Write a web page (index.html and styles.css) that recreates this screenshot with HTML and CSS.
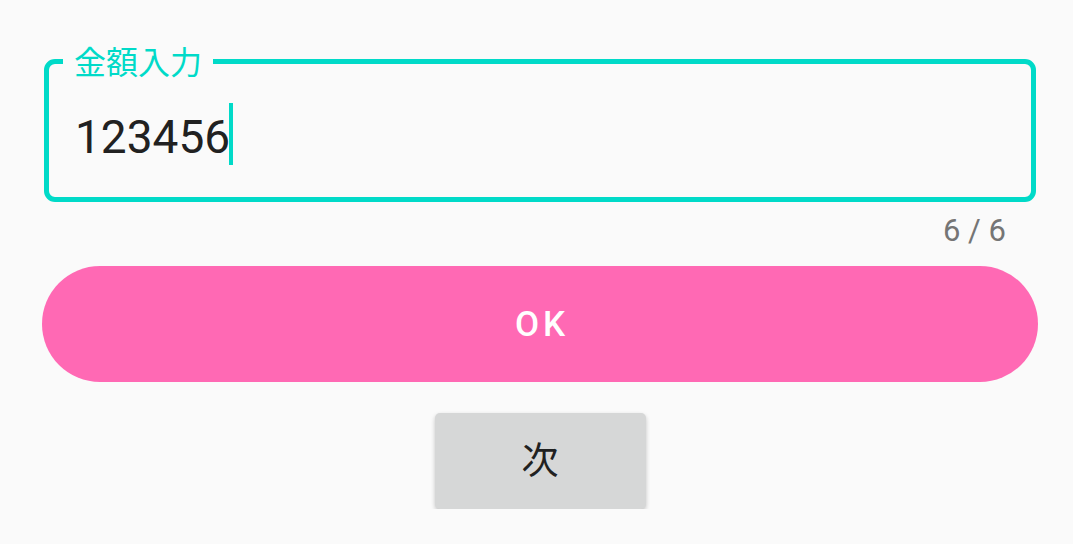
FILE: index.html
```html
<!DOCTYPE html>
<html lang="ja">
<head>
<meta charset="utf-8">
<title>金額入力</title>
<link rel="stylesheet" href="styles.css">
</head>
<body>
<main class="page">
  <div class="field">
    <span class="field-label">金額入力</span>
    <div class="field-row">
      <span class="field-value">123456</span>
      <span class="caret"></span>
    </div>
  </div>
  <div class="counter">6 / 6</div>
  <button class="btn-ok">OK</button>
  <button class="btn-next">次</button>
</main>
</body>
</html>
```
FILE: styles.css
```css
html, body {
  margin: 0;
  padding: 0;
  background: #fafafa;
}
body {
  font-family: "Roboto", "Noto Sans CJK JP", sans-serif;
  color: #212121;
}
.page {
  display: flex;
  flex-direction: column;
  padding: 59px 35px 0 42px;
}
.field {
  position: relative;
  margin: 0 2px;
  height: 143px;
  box-sizing: border-box;
  border: 5px solid #00dac8;
  border-radius: 11px;
  padding: 39px 0 0 26px;
}
.field-label {
  position: absolute;
  top: -17px;
  left: 14px;
  padding: 0 11px;
  background: #fafafa;
  color: #00dac8;
  font-size: 32px;
  line-height: 1;
}
.field-row {
  display: flex;
  align-items: flex-start;
}
.field-value {
  font-size: 46px;
  line-height: 54px;
  margin-top: 7px;
  color: #212121;
}
.caret {
  width: 4px;
  height: 62px;
  background: #00dac8;
  margin-left: -1px;
}
.counter {
  text-align: right;
  margin: 10px 32px 0 0;
  font-size: 31px;
  color: #757575;
}
.btn-ok {
  margin-top: 17px;
  height: 116px;
  border: none;
  border-radius: 58px;
  background: #ff69b4;
  color: #ffffff;
  font-family: "Roboto", sans-serif;
  font-size: 35px;
  font-weight: 500;
  letter-spacing: 4px;
  padding: 0 0 0 4px;
  display: flex;
  align-items: center;
  justify-content: center;
}
.btn-next {
  align-self: center;
  margin-top: 31px;
  width: 211px;
  height: 96px;
  border: none;
  border-radius: 5px;
  background: #d6d7d7;
  color: #212121;
  font-family: "Noto Sans CJK JP", sans-serif;
  font-size: 37px;
  padding: 0 0 6px;
  box-shadow: 0 2px 4px rgba(0, 0, 0, 0.22);
}
```
